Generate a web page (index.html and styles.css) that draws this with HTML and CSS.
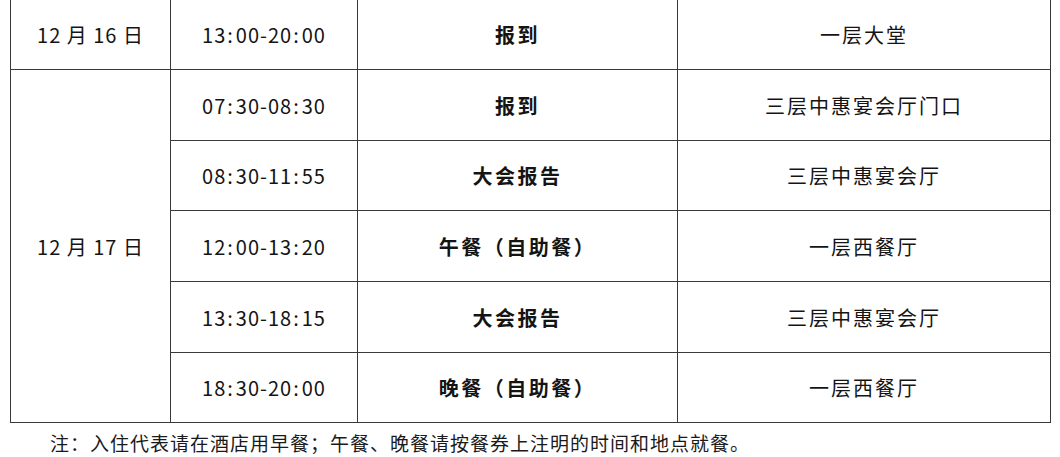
FILE: index.html
```html
<!DOCTYPE html>
<html lang="zh-CN">
<head>
<meta charset="utf-8">
<title>会议日程</title>
<link rel="stylesheet" href="styles.css">
</head>
<body>
<div class="schedule">
  <div class="cell date">12 月 16 日</div>
  <div class="cell time">13<span class="colon">:</span>00-20<span class="colon">:</span>00</div>
  <div class="cell event">报到</div>
  <div class="cell place">一层大堂</div>

  <div class="cell date span5">12 月 17 日</div>
  <div class="cell time">07<span class="colon">:</span>30-08<span class="colon">:</span>30</div>
  <div class="cell event">报到</div>
  <div class="cell place">三层中惠宴会厅门口</div>

  <div class="cell time">08<span class="colon">:</span>30-11<span class="colon">:</span>55</div>
  <div class="cell event">大会报告</div>
  <div class="cell place">三层中惠宴会厅</div>

  <div class="cell time">12<span class="colon">:</span>00-13<span class="colon">:</span>20</div>
  <div class="cell event">午餐（自助餐）</div>
  <div class="cell place">一层西餐厅</div>

  <div class="cell time">13<span class="colon">:</span>30-18<span class="colon">:</span>15</div>
  <div class="cell event">大会报告</div>
  <div class="cell place">三层中惠宴会厅</div>

  <div class="cell time">18<span class="colon">:</span>30-20<span class="colon">:</span>00</div>
  <div class="cell event">晚餐（自助餐）</div>
  <div class="cell place">一层西餐厅</div>
</div>
<p class="note">注：入住代表请在酒店用早餐；午餐、晚餐请按餐券上注明的时间和地点就餐。</p>
</body>
</html>
```

FILE: styles.css
```css
html, body {
  margin: 0;
  padding: 0;
  background: #fff;
}

body {
  font-family: "Noto Sans CJK SC", "Noto Sans", sans-serif;
  color: #141414;
  width: 1060px;
  height: 457px;
  overflow: hidden;
}

.schedule {
  display: grid;
  grid-template-columns: 160px 187px 320px 373px;
  grid-template-rows: 71px 71px 70px 71px 71px 70px;
  margin: -2px 0 0 10px;
  width: 1041px;
  border-top: 1px solid #3a3a3a;
  border-left: 1px solid #3a3a3a;
  box-sizing: border-box;
}

.cell {
  box-sizing: border-box;
  border-right: 1px solid #3a3a3a;
  border-bottom: 1px solid #3a3a3a;
  display: flex;
  align-items: center;
  justify-content: center;
  font-size: 20px;
  line-height: 1;
  padding-top: 1px;
}

.span5 {
  grid-row: span 5;
}

.date {
  letter-spacing: 1px;
}

.time {
  letter-spacing: 1px;
}

.colon {
  margin: 0 2px 0 1px;
}

.event {
  font-weight: 700;
  letter-spacing: 2.5px;
}

.place {
  letter-spacing: 2px;
}

.note {
  margin: 8px 0 0 50px;
  font-size: 19px;
  line-height: 24px;
  letter-spacing: 1px;
  color: #1a1a1a;
}
```
